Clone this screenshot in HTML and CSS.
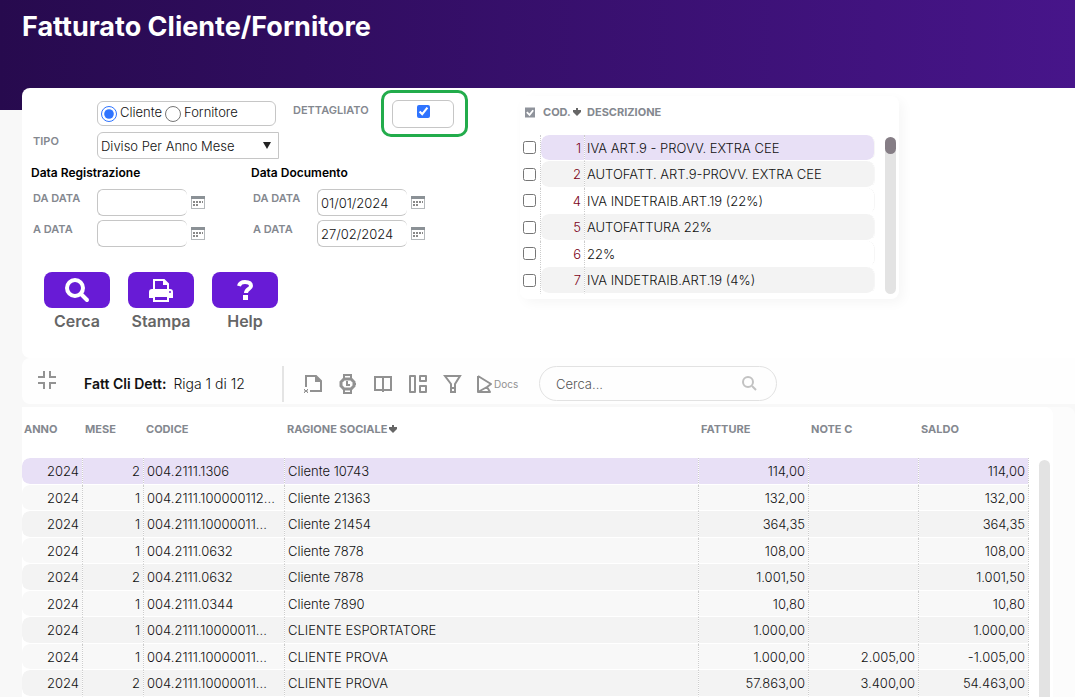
FILE: index.html
```
<!DOCTYPE html>
<html lang="it">
<head>
    <meta charset="UTF-8">
    <title>Fatturato Cliente/Fornitore</title>
    <link rel="stylesheet" href="styles.css">
</head>
<body>
    <header class="header">
        <h1>Fatturato Cliente/Fornitore</h1>
    </header>

    <main class="main">
        <section class="filters">
            <form class="form">
                <div class="row row-type">
                    <div class="radios">
                        <input type="radio" name="soggetto" id="cliente" checked><label for="cliente">Cliente</label>
                        <input type="radio" name="soggetto" id="fornitore"><label for="fornitore">Fornitore</label>
                    </div>
                    <label class="label" for="dettagliato">DETTAGLIATO</label>
                    <div class="check-box">
                        <input type="checkbox" id="dettagliato" checked>
                    </div>
                </div>

                <div class="row row-select">
                    <label class="label" for="tipo">TIPO</label>
                    <div class="select">
                        <select id="tipo"><option>Diviso Per Anno Mese</option></select>
                        <svg width="8" height="7" viewBox="0 0 8 7"><path d="M0 0h8L4 7z"/></svg>
                    </div>
                </div>

                <div class="dates">
                    <fieldset>
                        <legend>Data Registrazione</legend>
                        <div class="row row-date">
                            <label class="label" for="reg-da">DA DATA</label>
                            <input type="text" id="reg-da">
                            <svg class="cal" width="14" height="13" viewBox="0 0 14 13"><use href="#i-cal"/></svg>
                        </div>
                        <div class="row row-date">
                            <label class="label" for="reg-a">A DATA</label>
                            <input type="text" id="reg-a">
                            <svg class="cal" width="14" height="13" viewBox="0 0 14 13"><use href="#i-cal"/></svg>
                        </div>
                    </fieldset>
                    <fieldset>
                        <legend>Data Documento</legend>
                        <div class="row row-date">
                            <label class="label" for="doc-da">DA DATA</label>
                            <input type="text" id="doc-da" value="01/01/2024">
                            <svg class="cal" width="14" height="13" viewBox="0 0 14 13"><use href="#i-cal"/></svg>
                        </div>
                        <div class="row row-date">
                            <label class="label" for="doc-a">A DATA</label>
                            <input type="text" id="doc-a" value="27/02/2024">
                            <svg class="cal" width="14" height="13" viewBox="0 0 14 13"><use href="#i-cal"/></svg>
                        </div>
                    </fieldset>
                </div>

                <div class="actions">
                    <button type="button">
                        <span class="pill"><svg width="26" height="26" viewBox="0 0 26 26"><circle cx="11" cy="11" r="8" fill="none" stroke="#fff" stroke-width="4"/><path d="M17 17l6 6" stroke="#fff" stroke-width="4" stroke-linecap="round"/></svg></span>
                        Cerca
                    </button>
                    <button type="button">
                        <span class="pill"><svg width="26" height="26" viewBox="0 0 26 26"><path d="M6 12V3h10l4 4v5" fill="none" stroke="#fff" stroke-width="2"/><path d="M15 2v6h6z" fill="#fff"/><path d="M4 12h18a3 3 0 0 1 3 3v6h-4v-3H5v3H1v-6a3 3 0 0 1 3-3z" fill="#fff"/><path d="M6 19v5h14v-5z" fill="#681bd6" stroke="#fff" stroke-width="2"/><circle cx="22" cy="15" r="1" fill="#681bd6"/></svg></span>
                        Stampa
                    </button>
                    <button type="button">
                        <span class="pill"><svg width="26" height="26" viewBox="0 0 26 26"><path d="M7 9c1-4 4-4 6-4 4 0 6 1 6 4 0 3-5 3-5 7" fill="none" stroke="#fff" stroke-width="4"/><path d="M11 18h5v5h-5z" fill="#fff"/></svg></span>
                        Help
                    </button>
                </div>
            </form>

            <div class="codes">
                <table>
                    <thead>
                        <tr>
                            <th class="c-sel"><svg width="10" height="11" viewBox="0 0 11 11"><path d="M0 0h11v11H0z" fill="#8f939b"/><path d="M2 5l3 3 4-5" fill="none" stroke="#fff" stroke-width="2"/></svg></th>
                            <th class="c-cod">COD.<svg width="8" height="8" viewBox="0 0 8 8"><use href="#i-sort"/></svg></th>
                            <th>DESCRIZIONE</th>
                        </tr>
                    </thead>
                    <tbody>
                        <tr class="selected"><td><input type="checkbox" aria-label="1"></td><td class="num">1</td><td>IVA ART.9 - PROVV. EXTRA CEE</td></tr>
                        <tr><td><input type="checkbox" aria-label="2"></td><td class="num">2</td><td>AUTOFATT. ART.9-PROVV. EXTRA CEE</td></tr>
                        <tr><td><input type="checkbox" aria-label="4"></td><td class="num">4</td><td>IVA INDETRAIB.ART.19 (22%)</td></tr>
                        <tr><td><input type="checkbox" aria-label="5"></td><td class="num">5</td><td>AUTOFATTURA 22%</td></tr>
                        <tr><td><input type="checkbox" aria-label="6"></td><td class="num">6</td><td>22%</td></tr>
                        <tr><td><input type="checkbox" aria-label="7"></td><td class="num">7</td><td>IVA INDETRAIB.ART.19 (4%)</td></tr>
                    </tbody>
                </table>
                <div class="track"><div class="thumb"></div></div>
            </div>
        </section>

        <section class="toolbar">
            <svg class="collapse" width="18" height="18" viewBox="0 0 18 18"><path d="M0 6h6V0M12 0v6h6M0 12h6v6M18 12h-6v6" fill="none" stroke="#939393" stroke-width="2"/></svg>
            <p class="status"><b>Fatt Cli Dett:</b> Riga 1 di 12</p>
            <div class="tools">
                <button type="button" aria-label="Esporta"><svg width="20" height="20" viewBox="0 0 20 20"><path d="M3 13V2h10l5 5v10H7" fill="none" stroke="#919191" stroke-width="2"/><path d="M12 1v7h7z" fill="#919191"/><path d="M1 15l4 4M5 15l-4 4M1 17h4" stroke="#919191"/></svg></button>
                <button type="button" aria-label="Cronologia"><svg width="20" height="20" viewBox="0 0 20 20"><path d="M6 5V1h7v4M6 15v4h7v-4" fill="none" stroke="#919191" stroke-width="2"/><path d="M6 5h7l3 3v4l-3 3H6l-3-3V8z" fill="none" stroke="#919191" stroke-width="3"/><path d="M9 7v4h3M16 10h2" fill="none" stroke="#919191" stroke-width="2"/></svg></button>
                <button type="button" aria-label="Colonne"><svg width="20" height="20" viewBox="0 0 20 20"><path d="M2 3h16v13H2zM10 3v15" fill="none" stroke="#919191" stroke-width="2"/></svg></button>
                <button type="button" aria-label="Layout"><svg width="20" height="20" viewBox="0 0 20 20"><path d="M2 2h5v16H2zM12 2h6v5h-6zM12 12h6v6h-6z" fill="none" stroke="#919191" stroke-width="2" stroke-linejoin="round"/></svg></button>
                <button type="button" aria-label="Filtro"><svg width="20" height="20" viewBox="0 0 20 20"><path d="M2 2h15l-5 8v8H8v-8zM8 14h4" fill="none" stroke="#919191" stroke-width="2"/></svg></button>
                <button type="button"><svg width="16" height="20" viewBox="0 0 16 20"><path d="M2 2v16l9-5 4-3L2 2M2 18h12l-3-5" fill="none" stroke="#919191" stroke-width="2" stroke-linejoin="round"/></svg><span>Docs</span></button>
            </div>
            <div class="search">
                <input type="text" placeholder="Cerca..." aria-label="Cerca">
                <svg width="15" height="15" viewBox="0 0 15 15"><circle cx="6" cy="6" r="5" fill="none" stroke="#c2c2c2" stroke-width="2"/><path d="M10 10l4 4" stroke="#c2c2c2" stroke-width="2"/></svg>
            </div>
        </section>

        <section class="grid">
            <table>
                <thead>
                    <tr>
                        <th class="w-s">ANNO</th>
                        <th class="w-s">MESE</th>
                        <th class="w-m">CODICE</th>
                        <th>RAGIONE SOCIALE<svg width="8" height="8" viewBox="0 0 8 8"><use href="#i-sort"/></svg></th>
                        <th class="w-n">FATTURE</th>
                        <th class="w-n">NOTE C</th>
                        <th class="w-n">SALDO</th>
                    </tr>
                </thead>
                <tbody>
                    <tr class="selected"><td class="num">2024</td><td class="num">2</td><td>004.2111.1306</td><td>Cliente 10743</td><td class="num">114,00</td><td class="num"></td><td class="num">114,00</td></tr>
                    <tr><td class="num">2024</td><td class="num">1</td><td>004.2111.100000112...</td><td>Cliente 21363</td><td class="num">132,00</td><td class="num"></td><td class="num">132,00</td></tr>
                    <tr><td class="num">2024</td><td class="num">1</td><td>004.2111.10000011...</td><td>Cliente 21454</td><td class="num">364,35</td><td class="num"></td><td class="num">364,35</td></tr>
                    <tr><td class="num">2024</td><td class="num">1</td><td>004.2111.0632</td><td>Cliente 7878</td><td class="num">108,00</td><td class="num"></td><td class="num">108,00</td></tr>
                    <tr><td class="num">2024</td><td class="num">2</td><td>004.2111.0632</td><td>Cliente 7878</td><td class="num">1.001,50</td><td class="num"></td><td class="num">1.001,50</td></tr>
                    <tr><td class="num">2024</td><td class="num">1</td><td>004.2111.0344</td><td>Cliente 7890</td><td class="num">10,80</td><td class="num"></td><td class="num">10,80</td></tr>
                    <tr><td class="num">2024</td><td class="num">1</td><td>004.2111.10000011...</td><td>CLIENTE ESPORTATORE</td><td class="num">1.000,00</td><td class="num"></td><td class="num">1.000,00</td></tr>
                    <tr><td class="num">2024</td><td class="num">1</td><td>004.2111.10000011...</td><td>CLIENTE PROVA</td><td class="num">1.000,00</td><td class="num">2.005,00</td><td class="num">-1.005,00</td></tr>
                    <tr><td class="num">2024</td><td class="num">2</td><td>004.2111.10000011...</td><td>CLIENTE PROVA</td><td class="num">57.863,00</td><td class="num">3.400,00</td><td class="num">54.463,00</td></tr>
                </tbody>
            </table>
            <div class="track"></div>
        </section>
    </main>

    <svg class="defs" width="0" height="0">
        <symbol id="i-cal" viewBox="0 0 14 13"><path d="M0 0h14v13H0z" fill="#b4b8bb"/><path d="M1 3h12v9H1z" fill="#fff"/><path d="M0 0h14v3H0z" fill="#8b9196"/><path d="M2 5h2v2H2zM5 5h2v2H5zM8 5h2v2H8zM11 5h1v2h-1zM2 8h2v2H2zM5 8h2v2H5z" fill="#8a8a8a"/></symbol>
        <symbol id="i-sort" viewBox="0 0 8 8"><path d="M3 0h2v2h3v2L4 8 0 4V2h3z" fill="#666"/></symbol>
    </svg>
</body>
</html>
```
FILE: styles.css
```
*{
    margin: 0;
    padding: 0;
    box-sizing: border-box;
}
body{
    display: flex;
    flex-direction: column;
    height: 100vh;
    overflow: hidden;
    background: #f8f8f8;
    color: #111;
    font-family: Inter, "Liberation Sans", sans-serif;
    font-size: 13px;
    line-height: 16px;
    font-weight: 300;
}
svg{
    flex: none;
}
input, select, button{
    font: inherit;
    color: inherit;
}
.defs{
    position: absolute;
}
.header{
    flex: none;
    height: 110px;
    padding: 11px 22px;
    background: linear-gradient(90deg, #270a4e, #47158a);
    color: #fff;
}
h1{
    font-size: 27px;
    line-height: 32px;
    font-weight: 700;
}
.main{
    flex: 1;
    display: flex;
    flex-direction: column;
    margin-top: -22px;
    margin-left: 22px;
    min-height: 0;
}
.label, th{
    color: #84888f;
    font-size: 11px;
    line-height: 14px;
    font-weight: 600;
}
th{
    font-weight: 700;
}

/* filters */
.filters{
    flex: none;
    display: flex;
    padding-bottom: 25px;
    background: #fff;
    border-radius: 8px 0 0 8px;
}
.form{
    width: 498px;
    padding: 12px 0 0 9px;
}
.row{
    display: flex;
    align-items: flex-start;
}
.row-type{
    padding-left: 66px;
    height: 32px;
}
.row-type .label{
    width: 99px;
    padding-top: 3px;
    margin-left: 17px;
}
.radios{
    display: flex;
    align-items: center;
    width: 179px;
    height: 25px;
    margin-top: 1px;
    padding-left: 3px;
    border: 1px solid #c6c6c6;
    border-radius: 6px;
}
.radios input{
    width: 16px;
    height: 16px;
    accent-color: #2f74ff;
}
.radios label{
    margin: 0 3px 4px 3px;
}
.check-box{
    position: relative;
    width: 62px;
    height: 28px;
    padding-top: 4px;
    border: 1px solid #c6c6c6;
    border-radius: 6px;
    text-align: center;
}
.check-box input{
    width: 13px;
    height: 13px;
    accent-color: #2f74ff;
}
/* highlight ring */
.check-box::after{
    content: "";
    position: absolute;
    top: -11px;
    left: -12px;
    width: 81px;
    height: 41px;
    border: 3px solid #22ac4b;
    border-radius: 10px;
    pointer-events: none;
}
.row-select{
    padding-left: 2px;
}
.row-select .label{
    width: 64px;
    padding-top: 2px;
}
.select{
    position: relative;
    width: 182px;
}
.select select{
    width: 100%;
    height: 27px;
    padding-left: 3px;
    border: 1px solid #c6c6c6;
    border-radius: 6px 0 0 6px;
    background: #fff;
    appearance: none;
}
.select svg{
    position: absolute;
    top: 10px;
    right: 8px;
    fill: #222;
}
.dates{
    display: flex;
    margin-top: 6px;
}
fieldset{
    width: 220px;
    border: 0;
}
legend{
    height: 24px;
    color: #000;
    font-size: 12px;
    font-weight: 600;
}
.row-date{
    height: 31px;
    padding-left: 2px;
}
.row-date .label{
    width: 64px;
    padding-top: 2px;
}
.row-date input{
    width: 90px;
    height: 27px;
    padding-left: 3px;
    border: 1px solid #c6c6c6;
    border-right: 0;
    border-radius: 6px;
}
.cal{
    margin: 7px 0 0 4px;
}
.actions{
    display: flex;
    gap: 18px;
    margin: 21px 0 0 13px;
}
.actions button{
    display: flex;
    flex-direction: column;
    align-items: center;
    width: 66px;
    border: 0;
    background: none;
    color: #666;
    font-size: 16px;
    line-height: 24px;
    font-weight: 600;
}
.pill{
    display: flex;
    align-items: center;
    justify-content: center;
    width: 66px;
    height: 36px;
    margin-bottom: 1px;
    border-radius: 8px;
    background: #681bd6;
}

/* vat codes */
table{
    width: 100%;
    table-layout: fixed;
    border-collapse: separate;
    border-spacing: 0;
}
th{
    text-align: left;
    vertical-align: top;
    white-space: nowrap;
}
th svg{
    margin-left: 2px;
}
td{
    padding: 0 3px 0 3px;
    border-right: 1px dotted #ccc;
    border-bottom: 1px solid #fff;
    background-clip: padding-box;
    white-space: nowrap;
}
.num{
    text-align: right;
}
.codes{
    display: flex;
    justify-content: space-between;
    align-items: flex-start;
    align-self: flex-start;
    width: 379px;
    height: 203px;
    margin-top: 8px;
    padding-right: 3px;
    border-radius: 8px;
    box-shadow: 4px 4px 12px #f6f6f6;
}
.codes table{
    width: 355px;
}
.codes th{
    height: 39px;
    padding: 9px 0 0 2px;
}
.codes .c-sel{
    width: 21px;
    padding: 11px 0 0 3px;
}
.codes .c-cod{
    width: 44px;
}
.codes td{
    height: 26px;
}
.codes tr:nth-child(even) td{
    height: 27px;
    background-color: #f3f3f3;
}
.codes .num{
    color: #7a0016;
    border-radius: 8px 0 0 8px;
}
.codes td:last-child{
    padding-left: 2px;
    border-right-color: #eee;
    border-radius: 0 8px 8px 0;
}
.codes tr td:first-child{
    background: #fff;
}
.codes td input{
    display: block;
}
.codes tr.selected td:not(:first-child), .grid tr.selected td{
    background-color: #e8e0f6;
}
.track{
    width: 11px;
    border-radius: 6px;
    background: #e3e3e3;
}
.codes .track{
    height: 157px;
    margin-top: 41px;
}
.thumb{
    height: 17px;
    border-radius: 6px;
    background: #857d85;
}

/* toolbar */
.toolbar{
    flex: none;
    display: flex;
    align-items: center;
    height: 46px;
    padding: 5px 0 0 16px;
    border-radius: 8px 0 0 8px;
    background: #fefefe;
}
.collapse{
    margin-bottom: 7px;
}
.status{
    width: 198px;
    margin-left: 28px;
    font-size: 14px;
}
.status b{
    margin-right: 3px;
    font-weight: 600;
}
.tools{
    display: flex;
    align-items: center;
    gap: 15px;
    width: 257px;
    height: 36px;
    padding-left: 19px;
    border-left: 2px solid #e4e4e4;
}
.tools button{
    display: flex;
    align-items: center;
    border: 0;
    background: none;
    color: #919191;
    font-size: 10px;
    font-weight: 400;
}
.tools button:last-child{
    margin-left: -2px;
}
.tools span{
    margin-left: 2px;
}
.search{
    display: flex;
    align-items: center;
    width: 238px;
    height: 35px;
    padding: 0 19px 0 16px;
    border: 1px solid #e2e2e2;
    border-radius: 18px;
}
.search input{
    flex: 1;
    min-width: 0;
    border: 0;
    outline: 0;
    background: none;
}
.search input::placeholder{
    color: #555;
}

/* invoices */
.grid{
    flex: 1;
    display: flex;
    gap: 10px;
    align-items: flex-start;
    min-height: 0;
    margin: 3px 22px 0 0;
    padding-right: 3px;
    border-radius: 0 8px 0 0;
    background: #fff;
    box-shadow: 22px 0 0 #fcfcfc;
}
.grid th{
    height: 51px;
    padding: 15px 0 0 2px;
}
.grid .w-s{
    width: 61px;
}
.grid .w-m{
    width: 141px;
}
.grid .w-n{
    width: 110px;
}
.grid td{
    height: 27px;
    background-color: #f3f3f3;
}
.grid tr:nth-child(even) td{
    height: 26px;
    background-color: #f8f8f8;
}
.grid td:first-child{
    border-radius: 8px 0 0 8px;
}
.grid .track{
    flex: none;
    align-self: stretch;
    margin-top: 53px;
    border-radius: 6px 6px 0 0;
}
```
